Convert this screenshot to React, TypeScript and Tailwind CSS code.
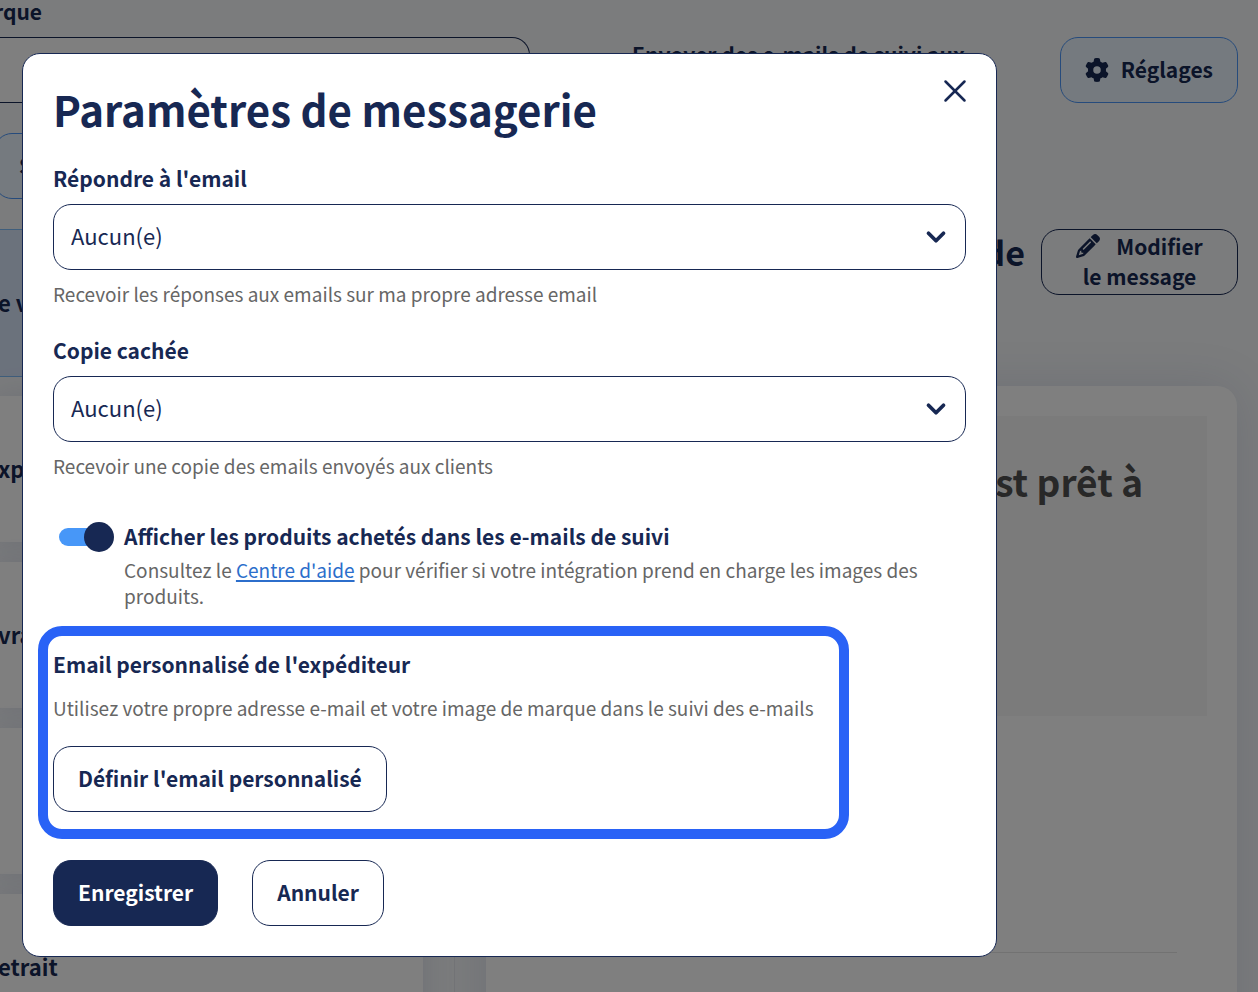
import React, { useState } from 'react';
import { ChevronDown, X } from 'lucide-react';
import { FaGear, FaPencil } from 'react-icons/fa6';

const steps = ['xp', 'vra', '', 'etrait'];

const buttonBase = 'h-[66px] rounded-[18px] border px-6 pb-[3px] text-[21px] leading-[30px] font-bold';
const labelText = 'block text-[21px] leading-7 font-bold';
const hintText = 'text-[19px] leading-[26px] text-[#666]';

const SelectField: React.FC<{ id: string; label: string; hint: string }> = ({ id, label, hint }) => (
  <div>
    <label htmlFor={id} className={labelText}>{label}</label>
    <div className="relative mt-3">
      <select
        id={id}
        aria-describedby={`${id}-hint`}
        className="block h-[66px] w-full appearance-none rounded-[18px] border border-[#172853] bg-white px-[17px] pb-1 text-[22px]"
      >
        <option>Aucun(e)</option>
      </select>
      <ChevronDown size={30} strokeWidth={3} className="pointer-events-none absolute top-[18px] right-[15px]" />
    </div>
    <p id={`${id}-hint`} className={`mt-[11px] ${hintText}`}>{hint}</p>
  </div>
);

const TrackingPage: React.FC = () => (
  <div className="-ml-[6px] h-screen overflow-hidden bg-[#f6f8fa]">
    <header className="flex items-start pr-5">
      <div className="w-[536px] shrink-0">
        <label htmlFor="brand" className="block h-[37px] text-[21px] leading-[22px] font-bold">rque</label>
        <input id="brand" className="block h-[66px] w-full rounded-r-[18px] border border-l-0 border-[#172853] bg-white" />
        <button className={`${buttonBase} mt-[30px] w-40 border-[#4d97f8] bg-[#ebf5ff] text-left`}>S</button>
      </div>
      <p className="ml-[102px] pt-[39px] text-[21px] leading-[30px] font-bold whitespace-nowrap">Envoyer des e-mails de suivi aux</p>
      <button className={`${buttonBase} mt-[37px] ml-auto border-[#4d97f8] bg-[#ebf5ff]`}>
        <FaGear size={24} className="mr-3 inline-block align-[-4px]" />
        Réglages
      </button>
    </header>

    <main className="mt-[30px] flex">
      <section className="w-[461px] shrink-0 border-r border-[#e8eaee] pr-[31px]">
        <div className="flex h-[148px] items-center border-y border-[#7ebcf8] bg-[#d7e4f9] pb-[2px] pl-1 text-[22px] font-bold">e v</div>
        <ul className="mt-[19px] flex flex-col gap-5">
          {steps.map((step, i) => (
            <li
              key={i}
              className="flex h-[146px] items-center bg-white pb-[2px] pl-1 text-[22px] font-bold shadow-[0_0_30px_rgba(30,50,120,0.12)]"
            >
              {step}
            </li>
          ))}
        </ul>
      </section>

      <section className="min-w-0 flex-1 pr-5 pl-[31px]">
        <div className="flex items-start justify-end gap-4">
          <h2 className="text-[34px] leading-[46px] font-bold">de</h2>
          <button className={`${buttonBase} w-[197px] border-[#172853]`}>
            <FaPencil size={24} className="mr-4 inline-block align-[-3px]" />
            Modifier le message
          </button>
        </div>
        <div className="mt-[91px] mr-px h-[700px] rounded-[20px] bg-white p-[30px] shadow-[0_0_50px_rgba(30,50,120,0.12)]">
          <div className="h-[300px] bg-[#f7f7f7] pt-[38px] pr-16 text-right text-[37px] leading-[54px] font-bold text-[#505050]">
            st prêt à
          </div>
          <hr className="mt-[236px] mr-[30px] border-[#e5e5e5]" />
        </div>
      </section>
    </main>
  </div>
);

export default function App() {
  const [showProducts, setShowProducts] = useState(true);

  return (
    <div className="overflow-hidden font-['Noto_Sans_CJK_SC',sans-serif] text-[#172853]">
      <TrackingPage />

      <div className="fixed inset-0 bg-black/50 pt-[53px] pr-[261px] pl-[22px]">
        <div
          role="dialog"
          aria-modal="true"
          aria-labelledby="dialog-title"
          className="rounded-[18px] border border-[#172853] bg-white px-[30px] pt-[22px] pb-[30px]"
        >
          <div className="flex items-start justify-between">
            <h1 id="dialog-title" className="text-[42px] leading-[66px] font-bold">Paramètres de messagerie</h1>
            <button aria-label="Fermer" className="-mt-1 -mr-2">
              <X size={38} strokeWidth={1.6} />
            </button>
          </div>

          <form className="mt-[22px]" onSubmit={(e) => e.preventDefault()}>
            <div className="flex flex-col gap-[29px]">
              <SelectField id="reply-to" label="Répondre à l'email" hint="Recevoir les réponses aux emails sur ma propre adresse email" />
              <SelectField id="bcc" label="Copie cachée" hint="Recevoir une copie des emails envoyés aux clients" />
            </div>

            <div className="mt-[43px] flex gap-[10px] pl-[6px]">
              <span className="relative flex h-[30px] w-[55px] shrink-0 items-center">
                <input
                  id="show-products"
                  type="checkbox"
                  role="switch"
                  checked={showProducts}
                  onChange={(e) => setShowProducts(e.target.checked)}
                  className="peer h-[18px] w-[52px] appearance-none rounded-full bg-gray-300 checked:bg-[#4797f8]"
                />
                <span className="pointer-events-none absolute top-0 left-0 size-[30px] rounded-full bg-[#172853] peer-checked:left-[25px]" />
              </span>
              <div>
                <label htmlFor="show-products" className={labelText}>
                  Afficher les produits achetés dans les e-mails de suivi
                </label>
                <p className={`mt-[7px] ${hintText}`}>
                  Consultez le{' '}
                  <a href="#aide" className="text-[#2c6ecb] underline decoration-2 underline-offset-2">Centre d'aide</a>
                  {' '}pour vérifier si votre intégration prend en charge les images des produits.
                </p>
              </div>
            </div>

            <section className="mt-[17px] mr-[117px] -ml-[15px] rounded-[24px] border-[10px] border-[#2962f6] pt-[14px] pb-[17px] pl-[5px]">
              <h2 className={labelText}>Email personnalisé de l'expéditeur</h2>
              <p className={`mt-[17px] ${hintText}`}>
                Utilisez votre propre adresse e-mail et votre image de marque dans le suivi des e-mails
              </p>
              <button type="button" className={`${buttonBase} mt-[25px] border-[#172853]`}>Définir l'email personnalisé</button>
            </section>

            <div className="mt-[21px] flex gap-[34px]">
              <button type="submit" className={`${buttonBase} border-[#172853] bg-[#172853] text-white`}>Enregistrer</button>
              <button type="button" className={`${buttonBase} border-[#172853]`}>Annuler</button>
            </div>
          </form>
        </div>
      </div>
    </div>
  );
}
